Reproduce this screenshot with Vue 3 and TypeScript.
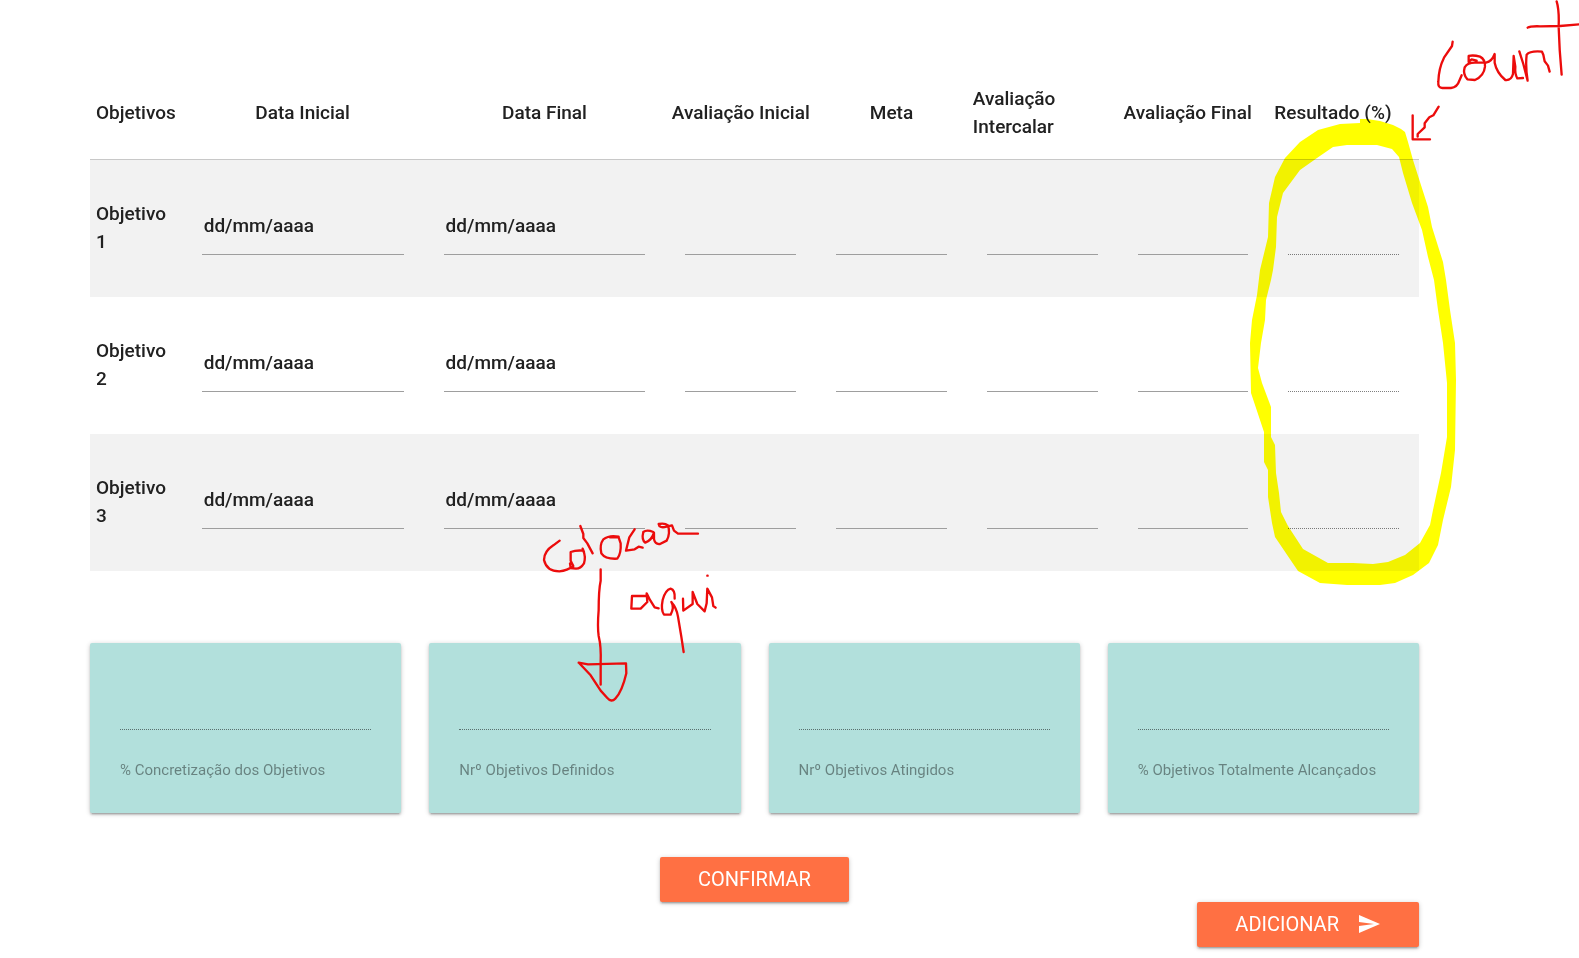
<script setup lang="ts">
import { reactive } from 'vue'

interface Goal {
  id: number
  start: string
  end: string
  initial: string
  target: string
  midterm: string
  final: string
  result: string
}

interface Summary {
  id: string
  label: string
  value: string
}

const headings: string[] = [
  'Objetivos',
  'Data Inicial',
  'Data Final',
  'Avaliação Inicial',
  'Meta',
  'Avaliação Intercalar',
  'Avaliação Final',
  'Resultado (%)',
]

const blankGoal = (id: number): Goal => ({
  id,
  start: '',
  end: '',
  initial: '',
  target: '',
  midterm: '',
  final: '',
  result: '',
})

const goals = reactive<Goal[]>([blankGoal(1), blankGoal(2), blankGoal(3)])

const summaries = reactive<Summary[]>([
  { id: 'rate', label: '% Concretização dos Objetivos', value: '' },
  { id: 'defined', label: 'Nrº Objetivos Definidos', value: '' },
  { id: 'reached', label: 'Nrº Objetivos Atingidos', value: '' },
  { id: 'total', label: '% Objetivos Totalmente Alcançados', value: '' },
])

const addGoal = () => {
  goals.push(blankGoal(goals.length + 1))
}
</script>

<template>
  <main class="page">
    <form class="form" @submit.prevent>
      <table class="goals">
        <colgroup>
          <col class="col-name" />
          <col class="col-date" />
          <col class="col-date" />
          <col span="5" />
        </colgroup>
        <thead>
          <tr>
            <th v-for="(heading, i) in headings" :key="heading" scope="col" :class="{ centered: i > 0 && i < 5 }">
              {{ heading }}
            </th>
          </tr>
        </thead>
        <tbody>
          <tr v-for="goal in goals" :key="goal.id">
            <th scope="row">Objetivo {{ goal.id }}</th>
            <td><input v-model="goal.start" class="field" type="text" placeholder="dd/mm/aaaa" :aria-label="`Data Inicial ${goal.id}`" /></td>
            <td><input v-model="goal.end" class="field" type="text" placeholder="dd/mm/aaaa" :aria-label="`Data Final ${goal.id}`" /></td>
            <td><input v-model="goal.initial" class="field" type="text" :aria-label="`Avaliação Inicial ${goal.id}`" /></td>
            <td><input v-model="goal.target" class="field" type="text" :aria-label="`Meta ${goal.id}`" /></td>
            <td><input v-model="goal.midterm" class="field" type="text" :aria-label="`Avaliação Intercalar ${goal.id}`" /></td>
            <td><input v-model="goal.final" class="field" type="text" :aria-label="`Avaliação Final ${goal.id}`" /></td>
            <td><input v-model="goal.result" class="field" type="text" disabled :aria-label="`Resultado ${goal.id}`" /></td>
          </tr>
        </tbody>
      </table>

      <section class="cards">
        <div v-for="item in summaries" :key="item.id" class="card">
          <input :id="item.id" v-model="item.value" class="field" type="text" disabled />
          <label :for="item.id">{{ item.label }}</label>
        </div>
      </section>

      <div class="actions">
        <button class="btn confirm" type="submit">CONFIRMAR</button>
        <button class="btn add" type="button" @click="addGoal">
          ADICIONAR
          <svg class="send" viewBox="0 0 24 24" aria-hidden="true">
            <path d="M2 21l21-9L2 3v7l15 2-15 2z" />
          </svg>
        </button>
      </div>
    </form>

    <!-- Hand-drawn notes over the form -->
    <svg class="ink marker" viewBox="0 0 1579 958" aria-hidden="true">
      <path
        fill-rule="evenodd"
        d="M1360 119L1367 119L1380 121L1393 125L1401 129L1405 132L1408 142L1413 160L1420 182L1428 207L1432 227L1443 262L1446 280L1450 310L1455 343L1456 380L1455 450L1451 487L1443 520L1438 545L1429 563L1413 575L1395 583L1380 585L1347 585L1320 583L1298 571L1275 537L1272 523L1268 497L1268 470L1264 462L1264 432L1251 393L1250 343L1252 320L1257 295L1260 270L1268 237L1269 203L1275 177L1285 158L1300 142L1318 130L1340 124L1360 123Z
           M1333 147L1347 145L1377 145L1392 149L1399 157L1403 173L1412 203L1422 230L1428 257L1434 280L1438 310L1443 343L1447 383L1447 437L1441 473L1433 510L1430 525L1420 543L1405 555L1388 562L1373 564L1353 563L1328 563L1303 549L1288 526L1281 512L1279 493L1276 473L1275 445L1271 437L1271 407L1262 383L1258 368L1261 343L1265 320L1266 300L1271 280L1273 270L1276 247L1277 217L1283 193L1300 170L1317 158Z"
      />
    </svg>
    <svg class="ink pen" viewBox="0 0 1579 958" aria-hidden="true">
      <g transform="translate(1380 0) scale(0.3333)">
        <path d="M218 125L216 138L192 173Q176 205 175 245Q173 264 187 264L213 264Q232 262 238 242L245 226" />
        <path d="M290 182L275 178L266 186L266 168Q280 164 300 170Q316 178 315 200Q312 228 285 240L262 238Q248 222 254 202Q262 188 285 188L318 188Q336 184 344 162L344 188Q350 218 376 240Q394 242 399 222L401 168L406 200Q404 222 412 235L429 234" />
        <path d="M418 154L430 192L443 242Q436 200 440 164Q450 152 486 155L490 164L494 184L504 197L509 215" />
        <path d="M530 4Q538 30 536 80Q538 150 545 224M443 83Q450 78 480 79L540 78L599 73" />
        <path d="M176 320L160 346L148 352L134 370L134 382L113 402L113 410M98 346L98 418L150 418" />
      </g>
      <g transform="translate(520 510) scale(0.3333)">
        <path d="M119 92L100 106Q72 124 72 150Q80 184 118 184Q142 182 160 168L152 152L152 126Q168 120 190 122Q198 140 192 160Q182 176 168 176L152 174L150 160M188 116L192 126" />
        <path d="M181 48L190 72L190 84L202 100L218 130" />
        <path d="M296 80Q268 74 250 88Q238 104 244 130Q256 148 292 146Q304 130 302 100L296 82L270 82" />
        <path d="M344 58L328 82L318 122L344 118L356 110L368 113" />
        <path d="M400 66Q380 58 370 66Q364 90 376 98Q396 90 402 68L402 88Q406 104 420 102L440 92Q452 70 444 46Q434 38 416 42Q418 56 440 50L456 46L462 62L474 71L534 71" />
        <path d="M242 178L242 212Q236 240 236 300Q232 350 236 378Q244 410 242 460L242 524" />
        <path d="M176 458L204 463L318 460L319 490Q306 546 286 566Q274 578 262 564L242 542L212 496L178 460" />
        <path d="M376 258L336 258L334 296L362 296L382 276L380 250L390 270L404 292L416 295" />
        <path d="M464 266Q466 240 452 236Q436 240 428 270Q422 300 432 314L452 314Q464 292 454 276Q470 294 474 320L484 380L491 426" />
        <path d="M489 266L490 302L518 282L518 246L532 282L554 304L560 280L562 236L576 262L580 288L587 293M562 197L563 197" />
      </g>
    </svg>
  </main>
</template>

<style>
body {
  margin: 0;
  background: #fff;
}
</style>

<style scoped>
.page {
  position: relative;
  box-sizing: border-box;
  min-height: 100vh;
  padding: 66px 160px 11px 90px;
  overflow: hidden;
  color: #212121;
  font-family: Roboto, "Liberation Sans", sans-serif;
  font-size: 19px;
  line-height: 28px;
}

.goals {
  width: 100%;
  border-collapse: collapse;
  table-layout: fixed;
}

.col-name {
  width: 6.9%;
}

.col-date {
  width: 18.2%;
}

.goals th {
  padding: 0 6px;
  font-weight: 500;
  text-align: left;
  vertical-align: middle;
}

.goals thead th {
  height: 93px;
}

.goals thead th.centered {
  padding: 0;
  text-align: center;
}

.goals thead tr {
  border-bottom: 1px solid #c8c8c8;
}

.goals tbody tr {
  height: 137px;
}

.goals tbody tr:nth-child(odd) {
  background: #f2f2f2;
}

.goals td {
  padding: 0 20px;
  vertical-align: middle;
}

.field {
  display: block;
  box-sizing: border-box;
  width: 100%;
  height: 57px;
  margin: 6px 0 10px;
  padding: 0 2px;
  border: 0;
  border-bottom: 1px solid #9e9e9e;
  border-radius: 0;
  outline: none;
  background: transparent;
  color: #212121;
  font: inherit;
  font-weight: 500;
}

.field::placeholder {
  color: #212121;
  opacity: 1;
}

.field:disabled {
  border-bottom: 1px dotted rgba(0, 0, 0, 0.5);
}

.cards {
  display: grid;
  grid-template-columns: repeat(4, 1fr);
  gap: 28px;
  margin-top: 72px;
}

.card {
  box-sizing: border-box;
  height: 170px;
  padding: 24px 30px;
  border-radius: 2px;
  background: #b2e0dc;
  box-shadow: 0 2px 2px 0 rgba(0, 0, 0, 0.14), 0 3px 1px -2px rgba(0, 0, 0, 0.12), 0 1px 5px 0 rgba(0, 0, 0, 0.2);
}

.card label {
  display: block;
  margin-top: 26px;
  color: rgba(0, 0, 0, 0.42);
  font-size: 15px;
}

.actions {
  display: flex;
  flex-direction: column;
  align-items: center;
  margin-top: 44px;
}

.btn {
  display: flex;
  align-items: center;
  height: 45px;
  padding: 0 38px;
  border: 0;
  border-radius: 2px;
  background: #ff7043;
  box-shadow: 0 2px 2px 0 rgba(0, 0, 0, 0.14), 0 3px 1px -2px rgba(0, 0, 0, 0.12), 0 1px 5px 0 rgba(0, 0, 0, 0.2);
  color: #fff;
  font: inherit;
  font-size: 20px;
  cursor: pointer;
}

.add {
  align-self: flex-end;
}

.send {
  width: 24px;
  height: 24px;
  margin-left: 18px;
  fill: currentColor;
}

.ink {
  position: absolute;
  top: 0;
  left: 0;
  width: 100%;
  pointer-events: none;
}

.marker {
  fill: #ff0;
  mix-blend-mode: multiply;
}

.pen {
  fill: none;
  stroke: #ec0c0c;
  stroke-width: 7;
  stroke-linecap: round;
  stroke-linejoin: round;
}
</style>
